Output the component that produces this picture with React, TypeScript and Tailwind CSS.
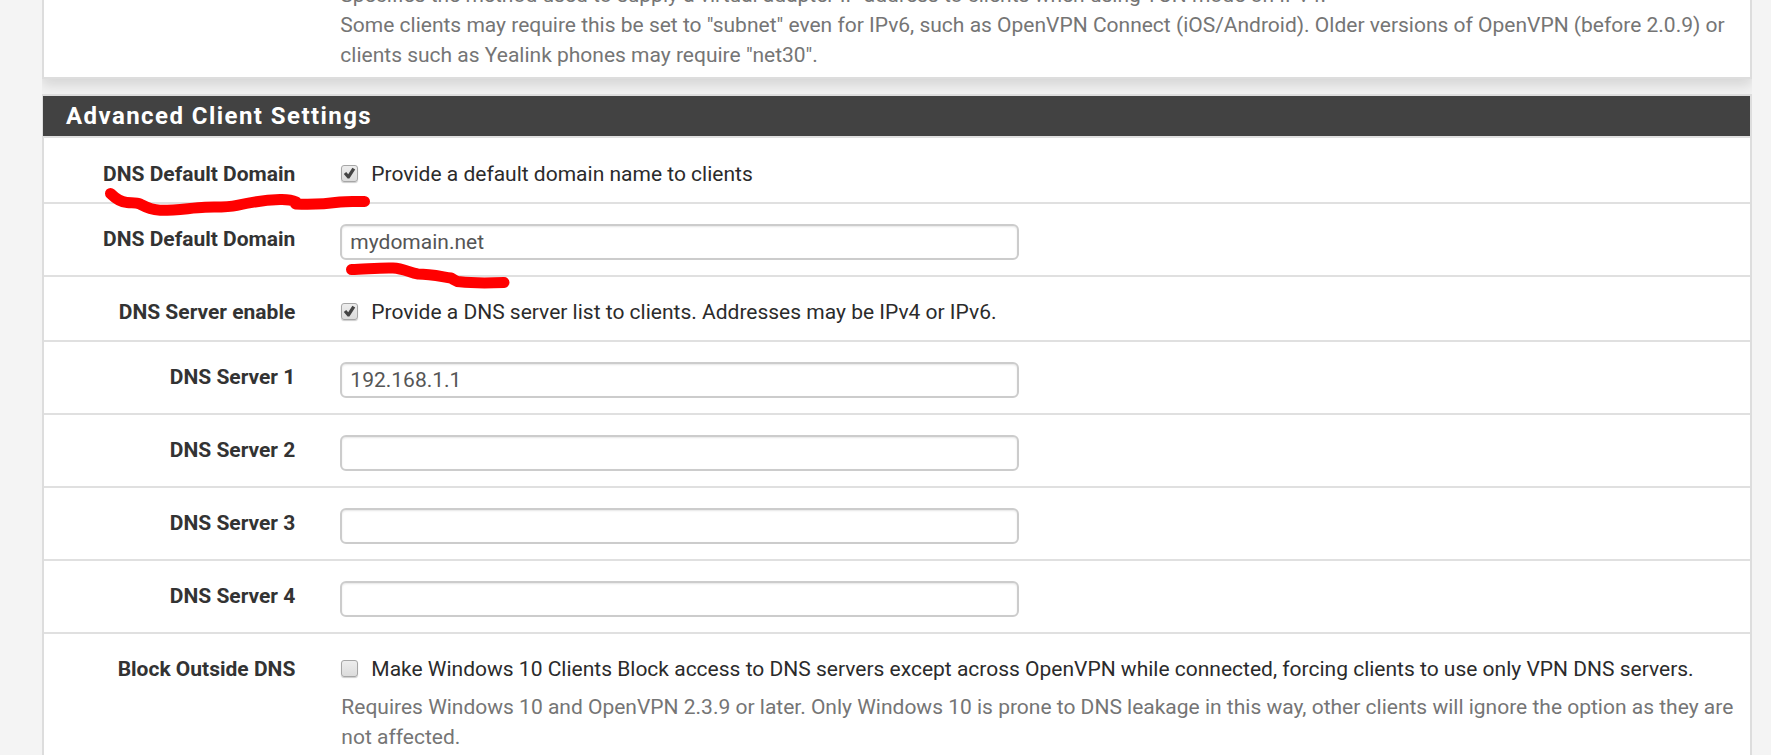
import React, { useState } from 'react';

interface RowProps {
  label: string;
  htmlFor: string;
  last?: boolean;
  children: React.ReactNode;
}

interface TextRowProps {
  id: string;
  label: string;
  initial?: string;
}

interface CheckRowProps {
  id: string;
  label: string;
  text: string;
  help?: string;
  initial?: boolean;
  last?: boolean;
}

const Row: React.FC<RowProps> = ({ label, htmlFor, last, children }) => (
  <div className={`flex items-start pt-5 ${last ? '' : 'border-b-2 border-[#e0e0e0]'}`}>
    <label htmlFor={htmlFor} className="w-1/6 shrink-0 pr-[33px] text-right font-bold text-[#333]">
      {label}
    </label>
    {children}
  </div>
);

const TextRow: React.FC<TextRowProps> = ({ id, label, initial = '' }) => {
  const [value, setValue] = useState(initial);

  return (
    <Row label={label} htmlFor={id}>
      <div className="w-5/12 pr-5 pb-[15px] pl-3">
        <input
          type="text"
          id={id}
          value={value}
          onChange={(e) => setValue(e.target.value)}
          className="block h-9 w-full rounded-md border-2 border-[#ccc] bg-white px-2 text-[#555] shadow-[inset_0_1px_2px_rgba(0,0,0,0.1)] outline-none focus:border-[#66afe9]"
        />
      </div>
    </Row>
  );
};

const CheckRow: React.FC<CheckRowProps> = ({ id, label, text, help, initial = false, last }) => {
  const [checked, setChecked] = useState(initial);

  return (
    <Row label={label} htmlFor={id} last={last}>
      <div className="w-5/6 pr-3 pb-[13px] pl-3">
        <label className="flex items-start text-[#2b2b2b]">
          <span className="relative mt-1.5 mr-[13px] ml-px block h-[17px] w-[17px] shrink-0">
            <input
              type="checkbox"
              id={id}
              checked={checked}
              onChange={(e) => setChecked(e.target.checked)}
              className="block h-[17px] w-[17px] appearance-none rounded-[3px] border border-[#a6a6a6] bg-linear-to-b from-[#ededed] to-[#dcdcdc] shadow-[0_1px_1px_rgba(0,0,0,0.2)]"
            />
            {checked && (
              <svg viewBox="0 0 17 17" className="pointer-events-none absolute inset-0 h-[17px] w-[17px]">
                <path d="M2.8 9 L5.2 7 L7.2 9.2 L11.4 2.8 L14.2 4.4 L8.4 13.6 L6.6 13.6 Z" fill="#444" />
              </svg>
            )}
          </span>
          {text}
        </label>
        {help && <p className="mt-2 pl-px text-[#757575]">{help}</p>}
      </div>
    </Row>
  );
};

const App: React.FC = () => {
  return (
    <div className="h-screen overflow-hidden bg-[#f4f4f4] pr-[19px] pl-[42px] font-['Roboto',sans-serif] text-[21px] leading-[30px]">
      <div className="overflow-hidden bg-[#f2f2f2] pb-[15px]">
        <div className="-mt-5 flex border-2 border-t-0 border-[#ddd] bg-white pb-[7px] shadow-[0_6px_12px_rgba(0,0,0,0.12)]">
          <div className="w-1/6 shrink-0" />
          <p className="w-5/6 pr-3 pl-3 text-[#757575]">
            Specifies the method used to supply a virtual adapter IP address to clients when using TUN mode on IPv4.
            <br />
            Some clients may require this be set to "subnet" even for IPv6, such as OpenVPN Connect (iOS/Android). Older
            versions of OpenVPN (before 2.0.9) or clients such as Yealink phones may require "net30".
          </p>
        </div>
      </div>

      <div className="relative border-2 border-[#ddd] bg-white">
        <div className="-ml-px border-b-2 border-[#e0e0e0] bg-[#424242] bg-clip-padding pl-[23px]">
          <h2 className="text-[24px] leading-[40px] font-bold tracking-[0.06em] text-white">
            Advanced Client Settings
          </h2>
        </div>

        <form className="pt-px" onSubmit={(e) => e.preventDefault()}>
          <CheckRow
            id="dns_domain_enable"
            label="DNS Default Domain"
            text="Provide a default domain name to clients"
            initial
          />
          <TextRow id="dns_domain" label="DNS Default Domain" initial="mydomain.net" />
          <CheckRow
            id="dns_server_enable"
            label="DNS Server enable"
            text="Provide a DNS server list to clients. Addresses may be IPv4 or IPv6."
            initial
          />
          <TextRow id="dns_server1" label="DNS Server 1" initial="192.168.1.1" />
          <TextRow id="dns_server2" label="DNS Server 2" />
          <TextRow id="dns_server3" label="DNS Server 3" />
          <TextRow id="dns_server4" label="DNS Server 4" />
          <CheckRow
            id="push_blockoutsidedns"
            label="Block Outside DNS"
            text="Make Windows 10 Clients Block access to DNS servers except across OpenVPN while connected, forcing clients to use only VPN DNS servers."
            help="Requires Windows 10 and OpenVPN 2.3.9 or later. Only Windows 10 is prone to DNS leakage in this way, other clients will ignore the option as they are not affected."
            last
          />
        </form>

        {/* red marker strokes */}
        <svg
          viewBox="44 96 500 200"
          className="pointer-events-none absolute top-0 left-0 h-[200px] w-[500px]"
          fill="none"
          stroke="#ff0000"
          strokeWidth="11"
          strokeLinecap="round"
          strokeLinejoin="round"
        >
          <path d="M110.5 193.5 C115 198 120 202 127 202.5 C132 203 136 202 140 204 C147 207.5 151 210 160 210.2 C176 210.5 190 208 205 207.3 C215 206.8 226 207.5 237 205.3 C252 202 264 200 280 199.5 C287 199.3 292 200 296 202 L295.5 204 C310 204.8 326 204 340 202 C349 201 356 201.7 364.5 201.5" />
          <path d="M351.5 269.5 C365 269.3 379 267.5 393 268 C404 268.5 410 273 418 274 C430 274 441 276.5 451 278 C455 280 456 282 460 281.8 C475 283.5 490 283 504 282.5" />
        </svg>
      </div>
    </div>
  );
};

export default App;
